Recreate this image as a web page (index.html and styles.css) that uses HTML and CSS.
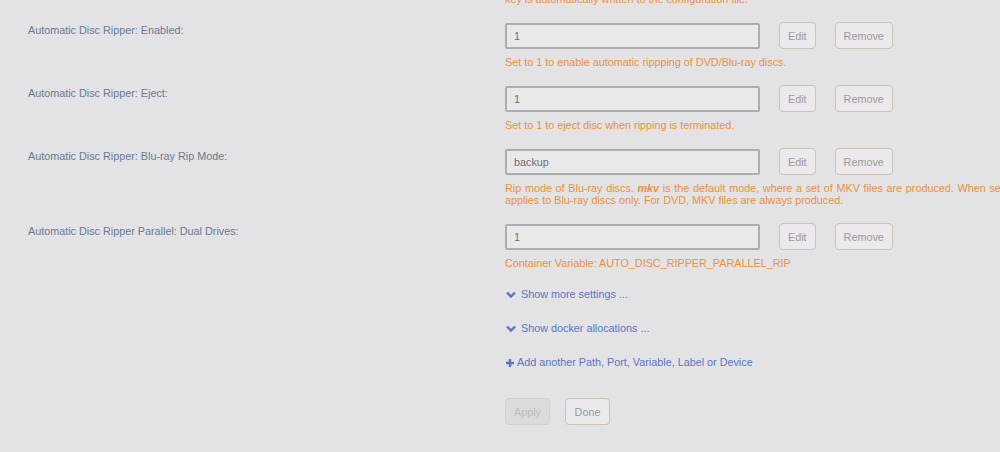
FILE: index.html
```html
<!DOCTYPE html>
<html>
<head>
    <link rel="stylesheet" href="styles.css">
</head>
<body>
    <div class="settings">
        <div class="setting tail">
            <div class="setting-label"></div>
            <div class="setting-value">
                <p class="setting-help">key is automatically written to the configuration file.</p>
            </div>
        </div>

        <div class="setting">
            <div class="setting-label">Automatic Disc Ripper: Enabled:</div>
            <div class="setting-value">
                <div class="value-row">
                    <input class="value-input" type="text" value="1">
                    <button class="btn">Edit</button>
                    <button class="btn">Remove</button>
                </div>
                <p class="setting-help">Set to 1 to enable automatic rippping of DVD/Blu-ray discs.</p>
            </div>
        </div>

        <div class="setting">
            <div class="setting-label">Automatic Disc Ripper: Eject:</div>
            <div class="setting-value">
                <div class="value-row">
                    <input class="value-input" type="text" value="1">
                    <button class="btn">Edit</button>
                    <button class="btn">Remove</button>
                </div>
                <p class="setting-help">Set to 1 to eject disc when ripping is terminated.</p>
            </div>
        </div>

        <div class="setting">
            <div class="setting-label">Automatic Disc Ripper: Blu-ray Rip Mode:</div>
            <div class="setting-value">
                <div class="value-row">
                    <input class="value-input" type="text" value="backup">
                    <button class="btn">Edit</button>
                    <button class="btn">Remove</button>
                </div>
                <p class="setting-help multi"><span class="spread">Rip mode of Blu-ray discs. <b><i>mkv</i></b> is the default mode, where a set of MKV files are produced. When set to <b><i>backup</i></b>, a copy of the (decrypted) file system is created instead. NOTE: This parameter</span><br>applies to Blu-ray discs only. For DVD, MKV files are always produced.</p>
            </div>
        </div>

        <div class="setting">
            <div class="setting-label">Automatic Disc Ripper Parallel: Dual Drives:</div>
            <div class="setting-value">
                <div class="value-row">
                    <input class="value-input" type="text" value="1">
                    <button class="btn">Edit</button>
                    <button class="btn">Remove</button>
                </div>
                <p class="setting-help">Container Variable: AUTO_DISC_RIPPER_PARALLEL_RIP</p>
            </div>
        </div>

        <div class="setting">
            <div class="setting-label"></div>
            <div class="setting-value links">
                <a class="toggle-link" href="#">
                    <svg class="chevron" viewBox="0 0 10 8"><path d="M1 1.5 L5 5.5 L9 1.5" fill="none" stroke="currentColor" stroke-width="2.4"/></svg>
                    Show more settings ...
                </a>
                <a class="toggle-link" href="#">
                    <svg class="chevron" viewBox="0 0 10 8"><path d="M1 1.5 L5 5.5 L9 1.5" fill="none" stroke="currentColor" stroke-width="2.4"/></svg>
                    Show docker allocations ...
                </a>
                <a class="toggle-link add" href="#">
                    <svg class="plus" viewBox="0 0 8 8"><path d="M4 0 V8 M0 4 H8" fill="none" stroke="currentColor" stroke-width="2.4"/></svg>
                    Add another Path, Port, Variable, Label or Device
                </a>

                <div class="actions">
                    <button class="btn" disabled>Apply</button>
                    <button class="btn">Done</button>
                </div>
            </div>
        </div>
    </div>
</body>
</html>
```

FILE: styles.css
```css
:root {
    --bg: #e3e2e5;
    --label: #6a7a90;
    --help: #e9923c;
    --link: #5a76bf;
    --muted: #9a9a9a;
}

* {
    margin: 0;
    padding: 0;
    box-sizing: border-box;
}

body {
    background: var(--bg);
    font-family: "Liberation Sans", Arial, sans-serif;
    font-size: 10.8px;
    line-height: 13px;
    overflow: hidden;
}

/* the list is scrolled: only the last help line of the previous entry shows */
.settings {
    margin-top: -7px;
}

.setting {
    display: grid;
    grid-template-columns: 505px 1fr;
    margin-bottom: 16px;
}

.setting-label {
    padding: 2px 0 0 28px;
    color: var(--label);
}

.setting-value {
    min-width: 0;
}

.value-row {
    display: flex;
    align-items: center;
    gap: 19px;
}

.value-input {
    width: 255px;
    height: 26px;
    padding: 0 7px;
    background: #e9e8eb;
    border: 2px solid #adadb1;
    border-radius: 2px;
    font-family: inherit;
    font-size: 10.8px;
    color: #6f6f6f;
}

.setting-help {
    margin-top: 7px;
    color: var(--help);
    white-space: nowrap;
}

.setting-help.multi {
    line-height: 12px;
    margin-bottom: 1px;
}

.setting-help .spread {
    word-spacing: 0.7px;
}

.tail .setting-help {
    margin-top: 0;
}

.btn {
    height: 27px;
    padding: 0 8px;
    background: #ebe9ec;
    border: 1px solid #cdc2b8;
    border-radius: 4px;
    font-family: inherit;
    font-size: 10.8px;
    color: var(--muted);
}

.btn:disabled {
    background: #dbdadd;
    border-color: #d0cfd2;
    color: #bdbdbd;
}

.links {
    padding-top: 2px;
}

.toggle-link {
    display: flex;
    align-items: center;
    gap: 5px;
    margin-bottom: 21px;
    color: var(--link);
    text-decoration: none;
}

.toggle-link.add {
    gap: 3px;
    margin-bottom: 29px;
}

.chevron {
    width: 10px;
    height: 8px;
    margin-left: 1px;
}

.plus {
    width: 8px;
    height: 8px;
    margin-left: 1px;
}

.actions {
    display: flex;
    gap: 15px;
}

.actions .btn {
    width: 45px;
}
```
